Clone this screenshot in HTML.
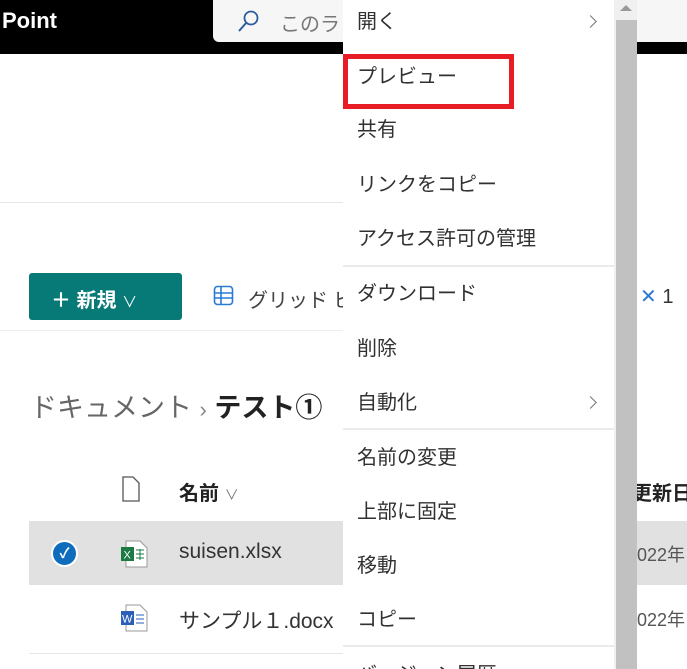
<!DOCTYPE html>
<html><head><meta charset="utf-8"><style>
*{margin:0;padding:0;box-sizing:border-box}
html,body{width:687px;height:669px;overflow:hidden}
body{background:#fff;position:relative;font-family:"Liberation Sans","Noto Sans CJK JP",sans-serif;color:#323130}
.a{position:absolute;white-space:nowrap}
.mi{position:absolute;left:357px;font-size:20px;color:#323130;line-height:24px;white-space:nowrap}
.sep{position:absolute;left:343px;width:271px;height:2px;background:#edebe9}
.chev{position:absolute;left:586px;width:9px;height:9px;border-top:1.5px solid #777;border-right:1.5px solid #777;transform:rotate(45deg)}
</style></head><body>
<div class="a" style="left:0;top:0;width:687px;height:54px;background:#000"></div>
<div class="a" style="left:2px;top:8px;color:#fff;font-size:22px;font-weight:bold">Point</div>
<div class="a" style="left:213px;top:0;width:474px;height:42px;background:#f6f6f6;border-radius:0 0 0 6px"></div>
<svg class="a" style="left:236px;top:8px" width="26" height="26" viewBox="0 0 26 26"><circle cx="15" cy="10" r="6.5" fill="none" stroke="#2b5c9e" stroke-width="1.8"/><path d="M10.5 14.5 L3 23" stroke="#2b5c9e" stroke-width="2"/></svg>
<div class="a" style="left:280px;top:8px;font-size:20px;color:#777">このラ</div>
<div class="a" style="left:0;top:202px;width:343px;height:1px;background:#e6e6e6"></div>
<div class="a" style="left:29px;top:273px;width:153px;height:47px;background:#077a78;border-radius:3px;color:#fff;font-size:20px;font-weight:bold;padding:11px 0 0 22px">＋ 新規 <span style="font-weight:normal;font-size:15px">∨</span></div>
<svg class="a" style="left:213px;top:285px" width="22" height="22" viewBox="0 0 22 22"><rect x="1.5" y="1.5" width="18" height="18" rx="3" fill="none" stroke="#2a7ad4" stroke-width="1.6"/><path d="M1.5 8H19.5M1.5 13H19.5M8 1.5V19.5" stroke="#2a7ad4" stroke-width="1.6"/></svg>
<div class="a" style="left:248px;top:284px;font-size:20px;color:#444">グリッド ビ</div>
<div class="a" style="left:640px;top:284px;font-size:20px;color:#2a7ad4">✕ <span style="color:#333">1</span></div>
<div class="a" style="left:0;top:330px;width:343px;height:1px;background:#eee"></div>
<div class="a" style="left:30px;top:386px;font-size:27px;color:#666">ドキュメント <span style="font-size:22px;color:#888">›</span> <b style="color:#222">テスト①</b></div>
<svg class="a" style="left:121px;top:476px" width="20" height="26" viewBox="0 0 20 26"><path d="M2 1H12L18 7V25H2Z" fill="none" stroke="#555" stroke-width="1.3"/></svg>
<div class="a" style="left:179px;top:477px;font-size:20px;font-weight:bold;color:#222">名前 <span style="font-weight:normal;font-size:14px;color:#777">∨</span></div>
<div class="a" style="left:632px;top:477px;font-size:20px;font-weight:bold;color:#222">更新日</div>
<div class="a" style="left:29px;top:521px;width:658px;height:64px;background:#e1e1e1"></div>
<div class="a" style="left:51px;top:540px;width:27px;height:27px;border-radius:50%;background:#0f6cbd;border:2px solid #fff;color:#fff;font-size:14px;text-align:center;line-height:23px;font-weight:bold">✓</div>
<svg class="a" style="left:120px;top:540px" width="28" height="28" viewBox="0 0 28 28"><path d="M6 1H20L27 8V27H6Z" fill="#fff" stroke="#999"/><rect x="1" y="7" width="13" height="14" fill="#1d7a45"/><text x="3.5" y="18.5" fill="#fff" font-size="11" font-family="Liberation Sans">X</text><path d="M16 10h8M16 14h8M16 18h8M20 9v11" stroke="#1d7a45"/></svg>
<div class="a" style="left:179px;top:540px;font-size:21px;color:#333">suisen.xlsx</div>
<div class="a" style="left:637px;top:541px;font-size:18px;color:#555">022年</div>
<svg class="a" style="left:120px;top:604px" width="28" height="28" viewBox="0 0 28 28"><path d="M6 1H20L27 8V27H6Z" fill="#fff" stroke="#999"/><rect x="1" y="7" width="13" height="14" fill="#2b5fb8"/><text x="2" y="18.5" fill="#fff" font-size="11" font-family="Liberation Sans">W</text><path d="M16 11h8M16 15h8M16 19h8" stroke="#2b5fb8"/></svg>
<div class="a" style="left:179px;top:605px;font-size:21px;color:#333">サンプル１.docx</div>
<div class="a" style="left:637px;top:606px;font-size:18px;color:#555">022年</div>
<div class="a" style="left:29px;top:653px;width:314px;height:1px;background:#e6e6e6"></div>
<div class="a" style="left:343px;top:0;width:271px;height:669px;background:#fff"></div>
<div class="a" style="left:614px;top:0;width:23px;height:669px;background:#f0f0f0"></div>
<div class="a" style="left:616px;top:20px;width:21px;height:649px;background:#c1c1c1"></div>
<div class="a" style="left:620px;top:5px;width:0;height:0;border-left:6px solid transparent;border-right:6px solid transparent;border-bottom:6px solid #999"></div>
<div class="mi" style="top:10px">開く</div><div class="chev" style="top:17px"></div>
<div class="a" style="left:343px;top:54px;width:171px;height:55px;border:5px solid #e81c24"></div>
<div class="mi" style="top:65px">プレビュー</div>
<div class="mi" style="top:118px">共有</div>
<div class="mi" style="top:173px">リンクをコピー</div>
<div class="mi" style="top:227px">アクセス許可の管理</div>
<div class="sep" style="top:265px"></div>
<div class="mi" style="top:282px">ダウンロード</div>
<div class="mi" style="top:337px">削除</div>
<div class="mi" style="top:391px">自動化</div><div class="chev" style="top:398px"></div>
<div class="sep" style="top:428px"></div>
<div class="mi" style="top:446px">名前の変更</div>
<div class="mi" style="top:500px">上部に固定</div>
<div class="mi" style="top:554px">移動</div>
<div class="mi" style="top:608px">コピー</div>
<div class="sep" style="top:645px"></div>
<div class="mi" style="top:663px">バージョン履歴</div>
</body></html>
